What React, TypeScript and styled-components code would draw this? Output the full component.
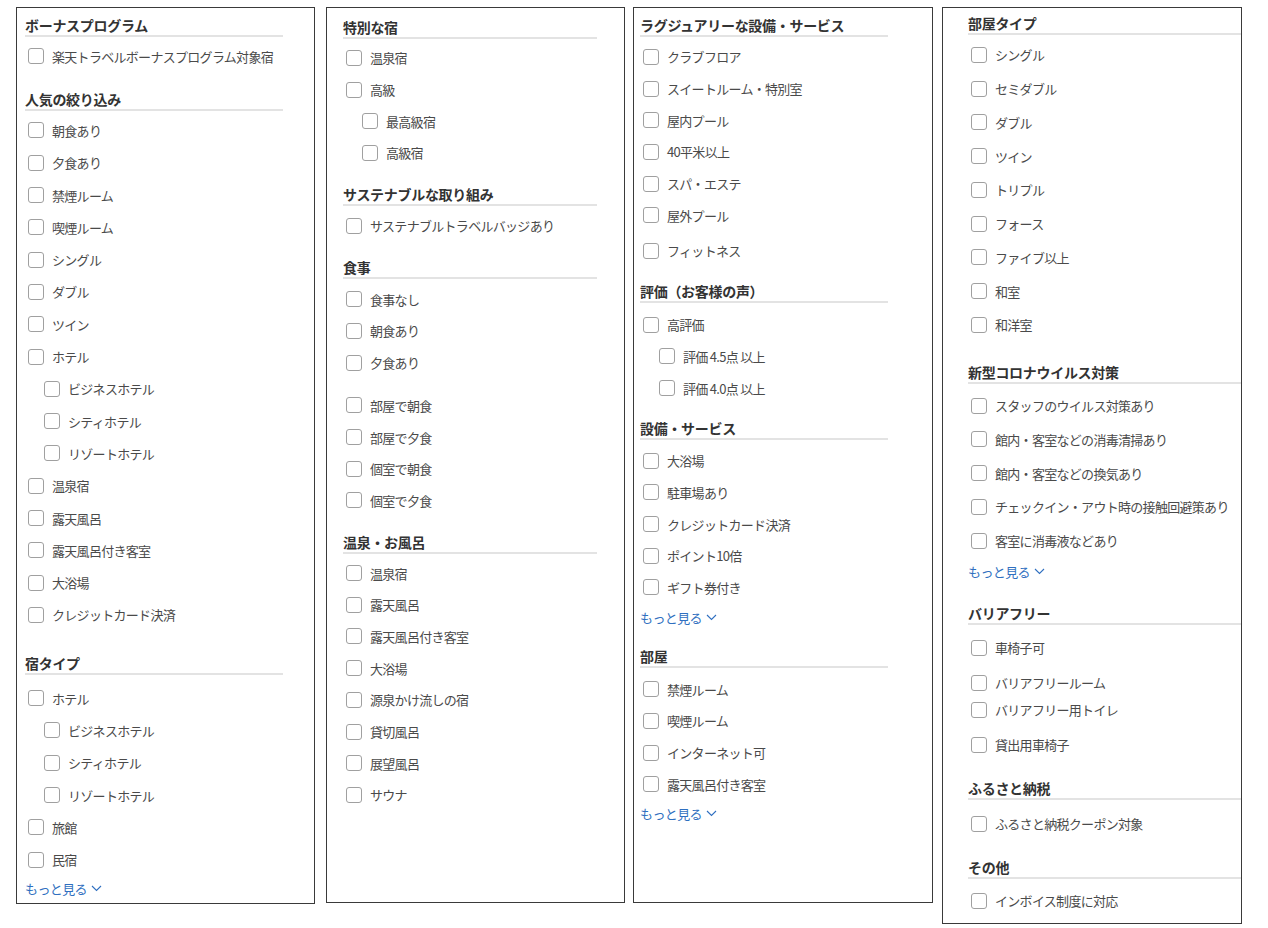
import React from "react";
import styled, { createGlobalStyle } from "styled-components";

const Global = createGlobalStyle`
  html, body { margin: 0; padding: 0; background: #fff; }
  body { font-family: "Noto Sans CJK JP", "Noto Sans", sans-serif; }
`;

type Item = { label: string; indent?: boolean; mt?: number; h?: number };
type Sec = { title: string; mt: number; listMt?: number; items: Item[]; more?: boolean; moreMt?: number };
type PanelDef = {
  offset: number;
  width: number;
  height: number;
  padX: number;
  padTop: number;
  lineW: number;
  pitch: number;
  listMt: number;
  sections: Sec[];
};

const Page = styled.div`
  display: flex;
  align-items: flex-start;
  padding-top: 7px;
`;

const Panel = styled.div<{ $offset: number; $w: number; $h: number; $padX: number; $padTop: number }>`
  box-sizing: border-box;
  margin-left: ${(p) => p.$offset}px;
  width: ${(p) => p.$w}px;
  height: ${(p) => p.$h}px;
  border: 1px solid #3a3a3a;
  padding: ${(p) => p.$padTop}px 0 0 ${(p) => p.$padX}px;
  overflow: hidden;
  flex: none;
`;

const Section = styled.section<{ $mt: number; $lineW: number }>`
  margin-top: ${(p) => p.$mt}px;
  width: ${(p) => p.$lineW}px;
`;

const Heading = styled.h3`
  margin: 0;
  font-size: 14px;
  font-weight: 700;
  line-height: 20px;
  color: #333;
  letter-spacing: -0.3px;
  border-bottom: 2px solid #e3e3e3;
  white-space: nowrap;
`;

const List = styled.ul<{ $mt: number }>`
  list-style: none;
  margin: ${(p) => p.$mt}px 0 0;
  padding: 0;
`;

const Row = styled.li<{ $h: number; $mt: number; $indent: boolean }>`
  display: flex;
  align-items: center;
  gap: 8px;
  height: ${(p) => p.$h}px;
  margin-top: ${(p) => p.$mt}px;
  padding-left: ${(p) => (p.$indent ? 19 : 3)}px;
`;

const Box = styled.input.attrs({ type: "checkbox" })`
  appearance: none;
  -webkit-appearance: none;
  box-sizing: border-box;
  width: 16px;
  height: 16px;
  margin: 0;
  border: 1px solid #a0a0a0;
  border-radius: 3px;
  background: #fff;
  flex: none;
`;

const Label = styled.span`
  font-size: 13px;
  color: #4a4a4a;
  letter-spacing: -0.7px;
  white-space: nowrap;
`;

const More = styled.a<{ $mt: number }>`
  display: flex;
  align-items: center;
  gap: 4px;
  margin-top: ${(p) => p.$mt}px;
  height: 18px;
  font-size: 13px;
  color: #2f6fc0;
  letter-spacing: -0.6px;
  text-decoration: none;
  cursor: pointer;
`;

const Chevron = () => (
  <svg width="11" height="7" viewBox="0 0 11 7" fill="none">
    <path d="M1 1l4.5 4.5L10 1" stroke="#2f6fc0" strokeWidth="1.1" />
  </svg>
);

const panels: PanelDef[] = [
  {
    offset: 16,
    width: 299,
    height: 897,
    padX: 8,
    padTop: 7,
    lineW: 258,
    pitch: 32.3,
    listMt: 3,
    sections: [
      { title: "ボーナスプログラム", mt: 0, items: [{ label: "楽天トラベルボーナスプログラム対象宿" }] },
      {
        title: "人気の絞り込み",
        mt: 17,
        items: [
          { label: "朝食あり" },
          { label: "夕食あり" },
          { label: "禁煙ルーム" },
          { label: "喫煙ルーム" },
          { label: "シングル" },
          { label: "ダブル" },
          { label: "ツイン" },
          { label: "ホテル" },
          { label: "ビジネスホテル", indent: true },
          { label: "シティホテル", indent: true },
          { label: "リゾートホテル", indent: true },
          { label: "温泉宿" },
          { label: "露天風呂" },
          { label: "露天風呂付き客室" },
          { label: "大浴場" },
          { label: "クレジットカード決済" },
        ],
      },
      {
        title: "宿タイプ",
        mt: 22,
        listMt: 7,
        items: [
          { label: "ホテル" },
          { label: "ビジネスホテル", indent: true },
          { label: "シティホテル", indent: true },
          { label: "リゾートホテル", indent: true },
          { label: "旅館" },
          { label: "民宿" },
        ],
        more: true,
        moreMt: 4,
      },
    ],
  },
  {
    offset: 11,
    width: 299,
    height: 896,
    padX: 16,
    padTop: 9,
    lineW: 254,
    pitch: 31.7,
    listMt: 3,
    sections: [
      {
        title: "特別な宿",
        mt: 0,
        items: [
          { label: "温泉宿" },
          { label: "高級" },
          { label: "最高級宿", indent: true },
          { label: "高級宿", indent: true },
        ],
      },
      { title: "サステナブルな取り組み", mt: 15, listMt: 4, items: [{ label: "サステナブルトラベルバッジあり" }] },
      {
        title: "食事",
        mt: 16,
        listMt: 4,
        items: [
          { label: "食事なし" },
          { label: "朝食あり" },
          { label: "夕食あり" },
          { label: "部屋で朝食", mt: 11 },
          { label: "部屋で夕食" },
          { label: "個室で朝食" },
          { label: "個室で夕食" },
        ],
      },
      {
        title: "温泉・お風呂",
        mt: 16,
        listMt: 3,
        items: [
          { label: "温泉宿" },
          { label: "露天風呂" },
          { label: "露天風呂付き客室" },
          { label: "大浴場" },
          { label: "源泉かけ流しの宿" },
          { label: "貸切風呂" },
          { label: "展望風呂" },
          { label: "サウナ" },
        ],
      },
    ],
  },
  {
    offset: 8,
    width: 300,
    height: 896,
    padX: 6,
    padTop: 7,
    lineW: 248,
    pitch: 31.7,
    listMt: 4,
    sections: [
      {
        title: "ラグジュアリーな設備・サービス",
        mt: 0,
        items: [
          { label: "クラブフロア" },
          { label: "スイートルーム・特別室" },
          { label: "屋内プール" },
          { label: "40平米以上" },
          { label: "スパ・エステ" },
          { label: "屋外プール" },
          { label: "フィットネス", mt: 4 },
        ],
      },
      {
        title: "評価（お客様の声）",
        mt: 14,
        listMt: 6,
        items: [
          { label: "高評価" },
          { label: "評価 4.5点 以上", indent: true },
          { label: "評価 4.0点 以上", indent: true },
        ],
      },
      {
        title: "設備・サービス",
        mt: 14,
        listMt: 5,
        items: [
          { label: "大浴場" },
          { label: "駐車場あり" },
          { label: "クレジットカード決済" },
          { label: "ポイント10倍" },
          { label: "ギフト券付き" },
        ],
        more: true,
        moreMt: 5,
      },
      {
        title: "部屋",
        mt: 20,
        listMt: 5,
        items: [
          { label: "禁煙ルーム" },
          { label: "喫煙ルーム" },
          { label: "インターネット可" },
          { label: "露天風呂付き客室" },
        ],
        more: true,
        moreMt: 4,
      },
    ],
  },
  {
    offset: 9,
    width: 300,
    height: 917,
    padX: 25,
    padTop: 5,
    lineW: 300,
    pitch: 33.75,
    listMt: 5,
    sections: [
      {
        title: "部屋タイプ",
        mt: 0,
        listMt: 3,
        items: [
          { label: "シングル" },
          { label: "セミダブル" },
          { label: "ダブル" },
          { label: "ツイン" },
          { label: "トリプル" },
          { label: "フォース" },
          { label: "ファイブ以上" },
          { label: "和室" },
          { label: "和洋室" },
        ],
      },
      {
        title: "新型コロナウイルス対策",
        mt: 20,
        items: [
          { label: "スタッフのウイルス対策あり" },
          { label: "館内・客室などの消毒清掃あり" },
          { label: "館内・客室などの換気あり" },
          { label: "チェックイン・アウト時の接触回避策あり" },
          { label: "客室に消毒液などあり" },
        ],
        more: true,
        moreMt: 5,
      },
      {
        title: "バリアフリー",
        mt: 22,
        listMt: 6,
        items: [
          { label: "車椅子可", h: 34, mt: 2 },
          { label: "バリアフリールーム", h: 34, mt: 1 },
          { label: "バリアフリー用トイレ", h: 20 },
          { label: "貸出用車椅子", h: 34, mt: 8 },
        ],
      },
      { title: "ふるさと納税", mt: 16, listMt: 7, items: [{ label: "ふるさと納税クーポン対象", h: 34 }] },
      { title: "その他", mt: 16, items: [{ label: "インボイス制度に対応", h: 34 }] },
    ],
  },
];

export default function App() {
  return (
    <>
      <Global />
      <Page>
        {panels.map((p, pi) => (
          <Panel key={pi} $offset={p.offset} $w={p.width} $h={p.height} $padX={p.padX} $padTop={p.padTop}>
            {p.sections.map((s, si) => (
              <Section key={si} $mt={s.mt} $lineW={p.lineW}>
                <Heading>{s.title}</Heading>
                <List $mt={s.listMt ?? p.listMt}>
                  {s.items.map((it, ii) => (
                    <Row key={ii} $h={it.h ?? p.pitch} $mt={it.mt ?? 0} $indent={!!it.indent}>
                      <Box aria-label={it.label} />
                      <Label>{it.label}</Label>
                    </Row>
                  ))}
                </List>
                {s.more && (
                  <More $mt={s.moreMt ?? 4}>
                    もっと見る
                    <Chevron />
                  </More>
                )}
              </Section>
            ))}
          </Panel>
        ))}
      </Page>
    </>
  );
}
